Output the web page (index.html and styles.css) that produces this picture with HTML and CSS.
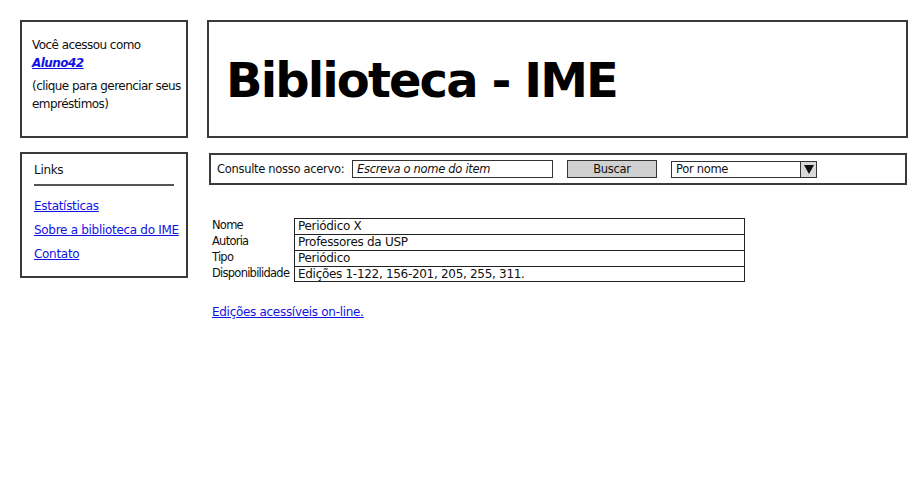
FILE: index.html
```html
<!DOCTYPE html>
<html lang="pt">
<head>
<meta charset="utf-8">
<title>Biblioteca - IME</title>
<link rel="stylesheet" href="styles.css">
</head>
<body>
<div class="page">
  <div class="row top">
    <div class="box user">
      <p class="line">Você acessou como</p>
      <p class="line"><a class="user-link" href="#">Aluno42</a></p>
      <p class="line note">(clique para gerenciar seus empréstimos)</p>
    </div>
    <div class="box title">
      <h1>Biblioteca - IME</h1>
    </div>
  </div>
  <div class="row bottom">
    <div class="box links">
      <div class="links-head">Links</div>
      <div class="links-rule"></div>
      <a class="nav" href="#">Estatísticas</a>
      <a class="nav" href="#">Sobre a biblioteca do IME</a>
      <a class="nav" href="#">Contato</a>
    </div>
    <div class="main">
      <div class="box search">
        <span class="search-label">Consulte nosso acervo:</span>
        <span class="search-input">Escreva o nome do item</span>
        <span class="search-btn">Buscar</span>
        <span class="search-select"><span class="sel-text">Por nome</span><span class="sel-arrow"><svg width="10" height="9" viewBox="0 0 10 9"><path d="M0 0 L10 0 L5 9 Z" fill="#111"/></svg></span></span>
      </div>
      <div class="details">
        <div class="drow"><span class="dlabel">Nome</span><span class="dval first">Periódico X</span></div>
        <div class="drow"><span class="dlabel">Autoria</span><span class="dval">Professores da USP</span></div>
        <div class="drow"><span class="dlabel">Tipo</span><span class="dval">Periódico</span></div>
        <div class="drow"><span class="dlabel">Disponibilidade</span><span class="dval last">Edições 1-122, 156-201, 205, 255, 311.</span></div>
      </div>
      <a class="online" href="#">Edições acessíveis on-line.</a>
    </div>
  </div>
</div>
</body>
</html>
```

FILE: styles.css
```css
* { box-sizing: border-box; }
html, body { margin: 0; padding: 0; background: #fff; }
body {
  font-family: "DejaVu Sans", "Liberation Sans", sans-serif;
  color: #111;
  width: 920px;
  height: 500px;
  overflow: hidden;
}
.page { padding: 20px 0 0 20px; }
.row { display: flex; }
.box {
  border: 2px solid #3a3a3a;
  background: #fff;
}
.top { height: 118px; }
.user {
  width: 168px;
  height: 118px;
  padding: 14px 0 0 10px;
  font-size: 12px;
  letter-spacing: -0.55px;
}
.line { margin: 0; line-height: 18px; }
.user-link {
  color: #1212e6;
  font-weight: bold;
  font-style: italic;
}
.note { margin-top: 5px; }
.title {
  margin-left: 19px;
  width: 701px;
  height: 118px;
  display: flex;
  align-items: center;
  padding-left: 17px;
}
.title h1 {
  margin: 0;
  font-size: 48px;
  font-weight: bold;
  letter-spacing: -1.9px;
  color: #000;
  position: relative;
  top: 1px;
}
.bottom { margin-top: 14px; align-items: flex-start; }
.links {
  width: 168px;
  height: 126px;
  padding: 8px 0 0 12px;
  font-size: 12px;
  letter-spacing: -0.3px;
  display: flex;
  flex-direction: column;
}
.links-head { line-height: 16px; }
.links-rule {
  width: 140px;
  height: 2px;
  background: #555;
  margin: 6px 0 12px 0;
}
.nav {
  color: #1212e6;
  line-height: 16px;
  margin-bottom: 8px;
  align-self: flex-start;
}
.main {
  margin-left: 21px;
  width: 698px;
  display: flex;
  flex-direction: column;
  align-items: flex-start;
}
.search {
  width: 698px;
  height: 32px;
  margin-top: 1px;
  display: flex;
  align-items: center;
  padding-left: 6px;
  font-size: 11.5px;
  letter-spacing: -0.3px;
}
.search-label { width: 135px; }
.search-input {
  width: 201px;
  height: 18px;
  border: 1px solid #333;
  font-style: italic;
  padding-left: 4px;
  line-height: 16px;
}
.search-btn {
  margin-left: 14px;
  width: 90px;
  height: 18px;
  border: 1px solid #333;
  background: #d0d0d0;
  text-align: center;
  line-height: 16px;
}
.search-select {
  margin-left: 14px;
  width: 146px;
  height: 17px;
  border: 1px solid #333;
  display: flex;
  line-height: 15px;
}
.sel-text { flex: 1; padding-left: 4px; }
.sel-arrow {
  width: 16px;
  border-left: 1px solid #333;
  background: #d8d8d8;
  display: flex;
  align-items: center;
  justify-content: center;
}
.details {
  margin-top: 33px;
  margin-left: 3px;
  font-size: 12px;
  letter-spacing: -0.3px;
}
.drow { display: flex; height: 16px; line-height: 15px; }
.dlabel { width: 82px; font-size: 11.5px; letter-spacing: -0.75px; white-space: nowrap; }
.dval {
  width: 451px;
  border: 1px solid #222;
  border-bottom: none;
  padding-left: 3px;
}
.dval.last { border-bottom: 1px solid #222; }
.online {
  margin-top: 22px;
  margin-left: 3px;
  font-size: 12px;
  letter-spacing: -0.3px;
  color: #1212e6;
  line-height: 16px;
}
```
